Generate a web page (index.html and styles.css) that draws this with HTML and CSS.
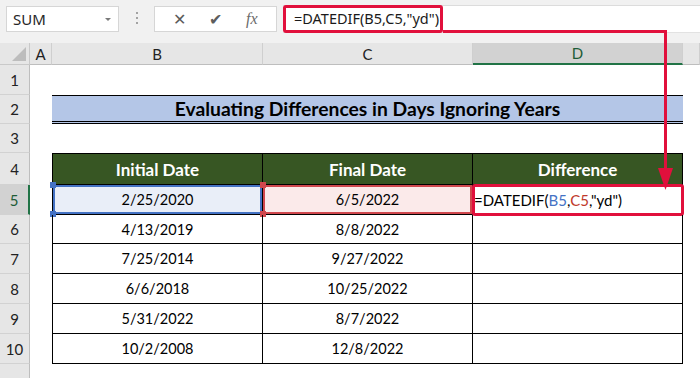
FILE: index.html
```html
<!DOCTYPE html>
<html lang="en">
<head>
	<meta charset="UTF-8">
	<title>DATEDIF - Days Ignoring Years</title>
	<link rel="stylesheet" href="styles.css">
</head>
<body>

	<div class="toolbar">
		<div class="namebox">
			<span>SUM</span>
			<span class="caret"></span>
		</div>
		<div class="grip"><i></i><i></i><i></i></div>
		<div class="fbuttons">
			<span class="fb cancel">&#x2715;</span>
			<span class="fb enter">&#x2714;</span>
			<span class="fb fx">fx</span>
		</div>
		<div class="finput">
			<span class="boxed">=DATEDIF(B5,C5,"yd")</span>
		</div>
	</div>

	<div class="sheet">
		<!-- column headers -->
		<div class="corner"><span class="tri"></span></div>
		<div class="ch">A</div>
		<div class="ch">B</div>
		<div class="ch">C</div>
		<div class="ch sel">D</div>
		<div class="ch"></div>

		<!-- row 1 -->
		<div class="rh">1</div>
		<div class="c"></div><div class="c"></div><div class="c"></div><div class="c"></div><div class="c"></div>

		<!-- row 2 -->
		<div class="rh">2</div>
		<div class="c"></div>
		<div class="title">Evaluating Differences in Days Ignoring Years</div>
		<div class="c"></div>

		<!-- row 3 -->
		<div class="rh">3</div>
		<div class="c"></div><div class="c"></div><div class="c"></div><div class="c"></div><div class="c"></div>

		<!-- row 4 -->
		<div class="rh">4</div>
		<div class="c"></div>
		<div class="th first">Initial Date</div>
		<div class="th">Final Date</div>
		<div class="th">Difference</div>
		<div class="c"></div>

		<!-- row 5 -->
		<div class="rh sel">5</div>
		<div class="c"></div>
		<div class="td first ref-b">2/25/2020
			<span class="h tl"></span><span class="h bl"></span>
		</div>
		<div class="td ref-c">6/5/2022
			<span class="h tl"></span><span class="h bl"></span>
		</div>
		<div class="td editing">=DATEDIF(<span class="b">B5</span>,<span class="r">C5</span>,"yd")</div>
		<div class="c"></div>

		<div class="rh">6</div>
		<div class="c"></div>
		<div class="td first">4/13/2019</div><div class="td">8/8/2022</div><div class="td"></div>
		<div class="c"></div>

		<div class="rh">7</div>
		<div class="c"></div>
		<div class="td first">7/25/2014</div><div class="td">9/27/2022</div><div class="td"></div>
		<div class="c"></div>

		<div class="rh">8</div>
		<div class="c"></div>
		<div class="td first">6/6/2018</div><div class="td">10/25/2022</div><div class="td"></div>
		<div class="c"></div>

		<div class="rh">9</div>
		<div class="c"></div>
		<div class="td first">5/31/2022</div><div class="td">8/7/2022</div><div class="td"></div>
		<div class="c"></div>

		<div class="rh">10</div>
		<div class="c"></div>
		<div class="td first">10/2/2008</div><div class="td">12/8/2022</div><div class="td"></div>
		<div class="c"></div>

		<div class="rh"></div>
		<div class="c"></div><div class="c"></div><div class="c"></div><div class="c"></div><div class="c"></div>
	</div>

	<!-- annotation arrow from formula bar to D5 -->
	<svg class="arrow" width="700" height="378" viewBox="0 0 700 378">
		<polyline points="443,31.5 665.5,31.5 665.5,172" fill="none" stroke="#e1103c" stroke-width="3"/>
		<polygon points="658,168 673,168 665.5,190" fill="#e1103c"/>
	</svg>

</body>
</html>
```

FILE: styles.css
```css
html, body {
	margin: 0;
	padding: 0;
	width: 700px;
	height: 378px;
	overflow: hidden;
	background: #fff;
	font-family: Lato, "Liberation Sans", sans-serif;
}

body {
	position: relative;
}

/* ---------- formula bar ---------- */

.toolbar {
	height: 43px;
	background: #f1f1f1;
	display: flex;
	align-items: flex-start;
	padding-top: 6px;
	box-sizing: border-box;
	font-family: "Noto Sans", "Open Sans", sans-serif;
}

.namebox {
	margin-left: 6px;
	width: 113px;
	height: 26px;
	background: #fff;
	border: 1px solid #d6d6d6;
	box-sizing: border-box;
	display: flex;
	align-items: center;
	justify-content: space-between;
	padding: 0 7px 0 6px;
	font-size: 15px;
	color: #262626;
}

.caret {
	width: 0;
	height: 0;
	border-left: 3px solid transparent;
	border-right: 3px solid transparent;
	border-top: 3px solid #7a7a7a;
}

.grip {
	width: 35px;
	display: flex;
	flex-direction: column;
	align-items: center;
	gap: 3px;
	padding-top: 6px;
}

	.grip i {
		width: 2px;
		height: 2px;
		background: #a3a3a3;
	}

.fbuttons {
	width: 123px;
	height: 26px;
	background: #fff;
	border: 1px solid #d6d6d6;
	box-sizing: border-box;
	display: flex;
	align-items: center;
	justify-content: space-around;
	padding: 0 6px;
	color: #5a5a5a;
}

.fb {
	width: 28px;
	text-align: center;
}

.cancel {
	font-size: 16px;
}

.enter {
	font-size: 16px;
	color: #5d5d5d;
}

.fx {
	font-family: "Liberation Serif", serif;
	font-style: italic;
	font-size: 16px;
	color: #6b6b6b;
}

.finput {
	flex: 1;
	margin-left: 6px;
	margin-top: -1px;
	height: 28px;
	background: #fff;
	border-top: 1px solid #dcdcdc;
	border-bottom: 1px solid #e2e2e2;
	box-sizing: border-box;
}

.boxed {
	display: inline-block;
	width: 160px;
	height: 28px;
	margin-top: -1px;
	box-sizing: border-box;
	border: 3px solid #e1103c;
	border-radius: 3px;
	padding-left: 8px;
	line-height: 21px;
	font-size: 14.5px;
	white-space: nowrap;
	color: #1a1a1a;
}

/* ---------- sheet grid ---------- */

.sheet {
	display: grid;
	grid-template-columns: 30px 22px 211px 210px 210px 1fr;
	grid-template-rows: 22px 30px 29px 29px 32px 30px 29px 30px 30px 30px 30px 30px;
	font-size: 14.5px;
}

.corner {
	background: #e6e6e6;
	border-right: 1px solid #c9c9c9;
	border-bottom: 1px solid #c9c9c9;
	position: relative;
}

.tri {
	position: absolute;
	right: 3px;
	bottom: 3px;
	width: 0;
	height: 0;
	border-left: 14px solid transparent;
	border-bottom: 14px solid #bdbdbd;
}

.ch {
	background: #e6e6e6;
	border-right: 1px solid #cfcfcf;
	border-bottom: 1px solid #bebebe;
	display: flex;
	align-items: center;
	justify-content: center;
	font-size: 15px;
	color: #222;
}

	.ch.sel {
		background: #d2d2d2;
		border-bottom: 2px solid #217346;
		color: #1d5c36;
	}

.rh {
	background: #e6e6e6;
	border-right: 1px solid #bebebe;
	border-bottom: 1px solid #d2d2d2;
	display: flex;
	align-items: center;
	justify-content: center;
	font-size: 15px;
	color: #222;
}

	.rh.sel {
		background: #d2d2d2;
		border-right: 2px solid #217346;
		color: #1d5c36;
	}

.c {
	background: #fff;
}

.title {
	grid-column: span 3;
	background: #b4c6e7;
	border-top: 1px solid #000;
	border-bottom: 3px double #000;
	display: flex;
	align-items: center;
	justify-content: center;
	font-weight: bold;
	font-size: 19.3px;
	color: #000;
}

.th {
	background: #375623;
	color: #fff;
	font-weight: bold;
	font-size: 17px;
	border-top: 1px solid #000;
	border-right: 1px solid #000;
	border-bottom: 1px solid #000;
	display: flex;
	align-items: center;
	justify-content: center;
}

.td {
	border-right: 1px solid #000;
	border-bottom: 1px solid #000;
	display: flex;
	align-items: center;
	justify-content: center;
	color: #000;
	position: relative;
}

.first {
	border-left: 1px solid #000;
}

/* ---------- edit-mode range highlights ---------- */

.ref-b {
	background: #e9eef8;
	box-shadow: inset 0 0 0 2px #4472c4;
}

.ref-c {
	background: #fbeaea;
	box-shadow: inset 0 0 0 2px #d0474d;
}

.h {
	position: absolute;
	width: 6px;
	height: 6px;
	left: -3px;
}

	.h.tl { top: -3px; }
	.h.bl { bottom: -3px; }

.ref-b .h { background: #4472c4; }
.ref-c .h { background: #d0474d; }

.editing {
	justify-content: flex-start;
	padding-left: 1px;
	font-size: 15px;
	outline: 3px solid #e1103c;
	outline-offset: -2px;
	border-radius: 2px;
}

	.editing .b { color: #4472c4; }
	.editing .r { color: #c0392b; }

.arrow {
	position: absolute;
	top: 0;
	left: 0;
	pointer-events: none;
}
```
